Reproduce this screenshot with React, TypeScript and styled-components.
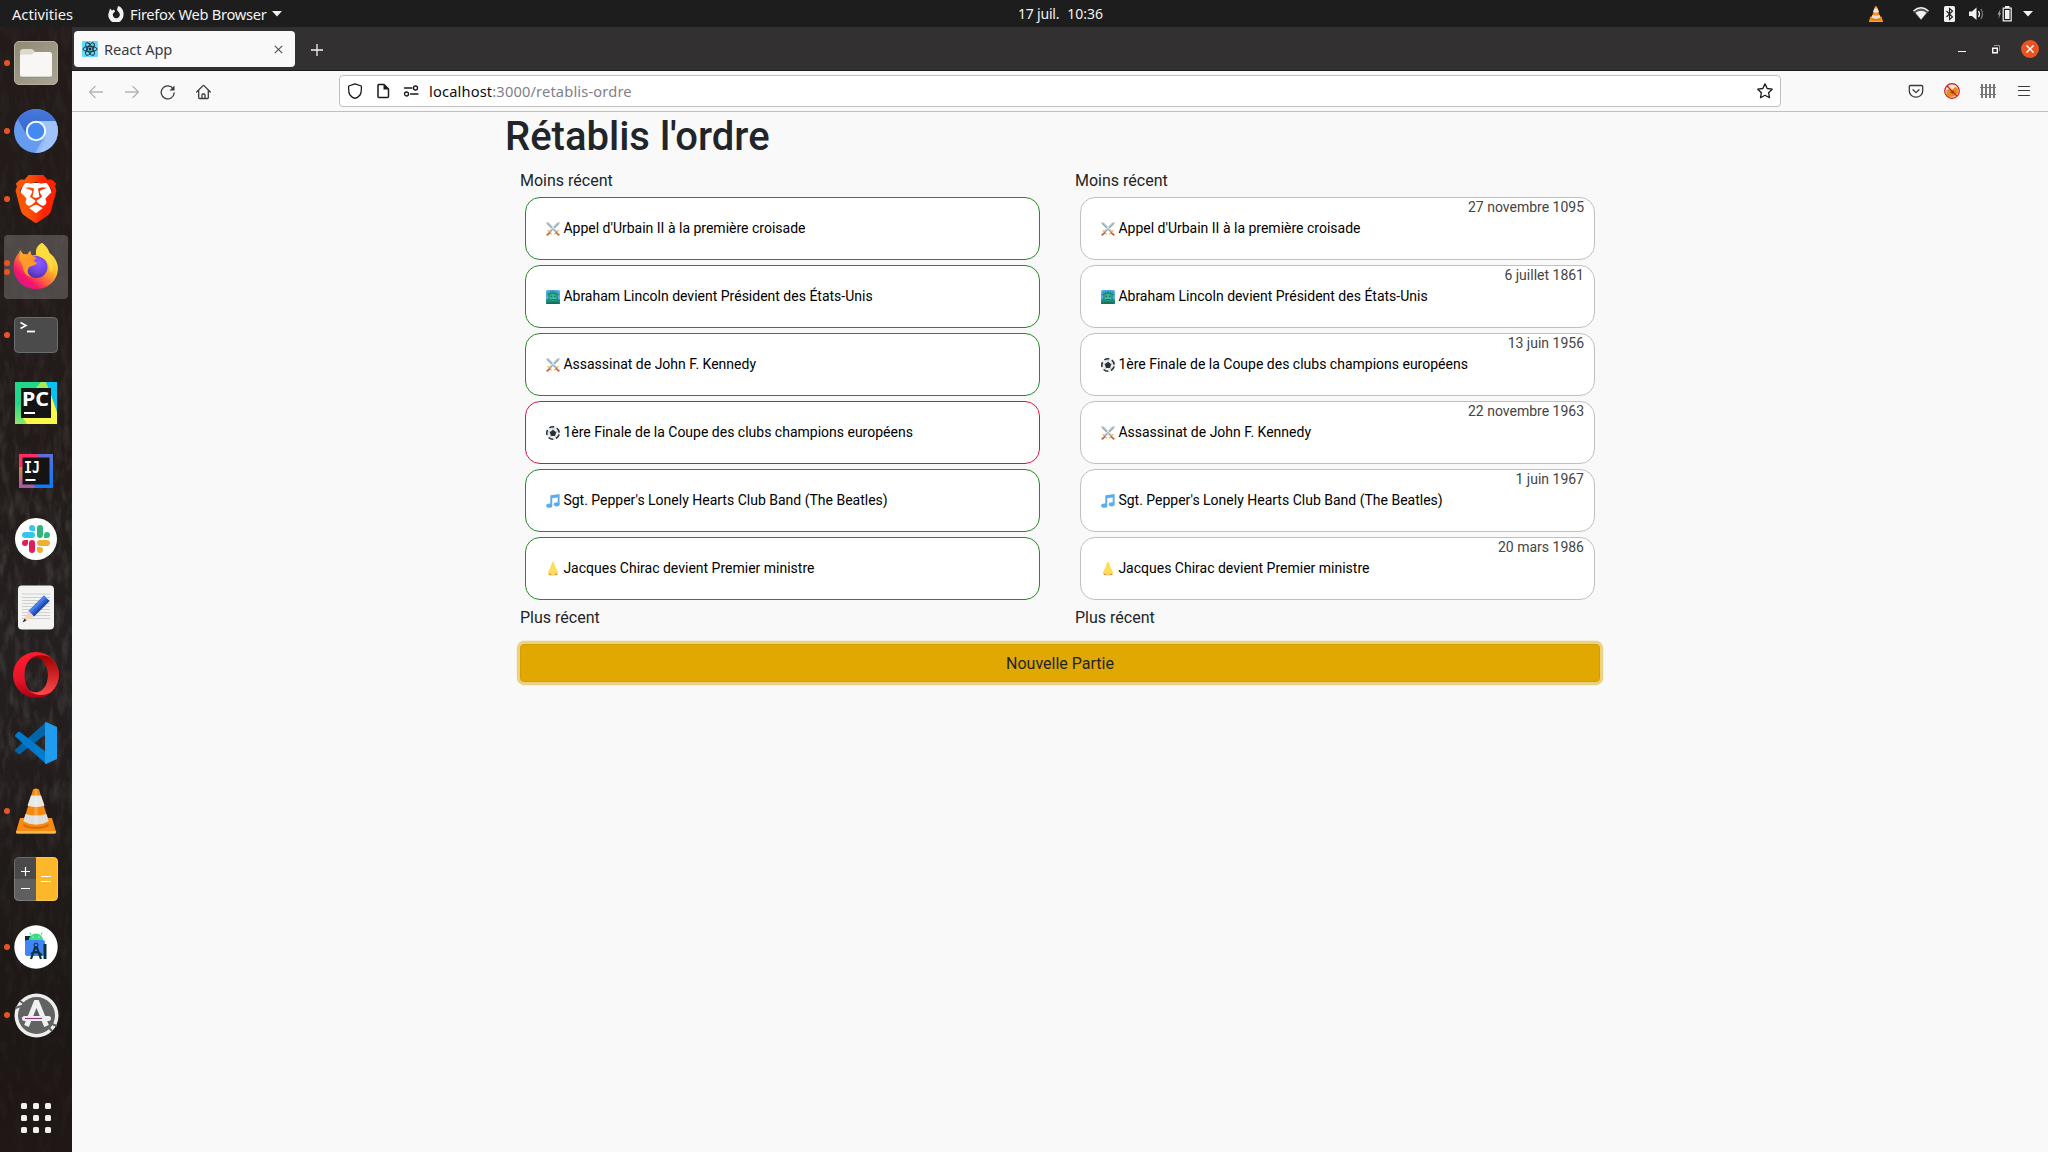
import React from "react";
import styled, { createGlobalStyle } from "styled-components";
import { SiBrave } from "react-icons/si";

const GlobalStyle = createGlobalStyle`
  * { box-sizing: border-box; }
  html, body { margin: 0; padding: 0; overflow: hidden; }
  svg { display: block; flex: none; }
`;

const Desktop = styled.div`
  display: flex;
  flex-direction: column;
  width: 2048px;
  height: 1152px;
  background: #1d1d1d;
  font-family: "Noto Sans", "Open Sans", sans-serif;
`;

/* ---------- top panel ---------- */

const Panel = styled.header`
  display: grid;
  grid-template-columns: 1018px 1fr auto;
  align-items: center;
  height: 27px;
  flex: none;
  background: #1d1d1d;
  color: #f2f2f2;
`;

const PanelLeft = styled.div`
  display: flex;
  align-items: center;
  padding-left: 12px;
`;

const PanelText = styled.span<{ $size?: number; $spacing?: number }>`
  font-size: ${(p) => p.$size ?? 14}px;
  line-height: 26px;
  letter-spacing: ${(p) => p.$spacing ?? 0}px;
  white-space: pre;
`;

const AppMenu = styled.div`
  display: flex;
  align-items: center;
  gap: 6px;
  padding-left: 35px;
`;

const Clock = styled.div`
  display: flex;
  gap: 8px;
`;

const Tray = styled.div`
  display: flex;
  align-items: center;
  height: 27px;
  padding-right: 15px;
`;

const TrayItem = styled.div<{ $after: number }>`
  margin-right: ${(p) => p.$after}px;
`;

/* ---------- dock ---------- */

const Workspace = styled.div`
  display: flex;
  flex: 1;
  min-height: 0;
`;

const Dock = styled.nav`
  position: relative;
  display: flex;
  flex-direction: column;
  gap: 4px;
  width: 72px;
  flex: none;
  padding: 4px;
  background: linear-gradient(180deg, #231b1a 0%, #221b1a 40%, #252020 55%, #201a19 75%, #1d1716 88%, #201716 100%);
`;

const Grain = styled.svg`
  position: absolute;
  inset: 0;
  width: 72px;
  height: 1125px;
`;

const DockItem = styled.div<{ $active?: boolean }>`
  position: relative;
  display: flex;
  align-items: center;
  justify-content: center;
  width: 64px;
  height: 64px;
  border-radius: 4px;
  background: ${(p) => (p.$active ? "rgba(255,255,255,0.2)" : "transparent")};
`;

const Dots = styled.div`
  position: absolute;
  left: 0;
  top: 0;
  height: 64px;
  display: flex;
  flex-direction: column;
  justify-content: center;
  gap: 3px;
`;

const Dot = styled.i`
  width: 6px;
  height: 6px;
  border-radius: 50%;
  background: #e95420;
`;

const AppsButton = styled.div`
  position: relative;
  display: grid;
  grid-template-columns: repeat(3, 6px);
  gap: 6px;
  justify-content: center;
  margin: auto 0 15px;
`;

const AppsDot = styled.i`
  width: 6px;
  height: 6px;
  border-radius: 1.5px;
  background: #f2f0ee;
`;

/* ---------- browser chrome ---------- */

const Browser = styled.main`
  display: flex;
  flex-direction: column;
  flex: 1;
  background: #f9f9fa;
`;

const TabStrip = styled.div`
  display: flex;
  align-items: center;
  height: 44px;
  padding: 0 9px 0 2px;
  background: #323031;
  border-bottom: 1px solid #1c1a1b;
`;

const Tab = styled.div`
  display: flex;
  align-items: center;
  width: 221px;
  height: 36px;
  margin-top: 1px;
  padding: 0 12px 0 8px;
  border-radius: 4px;
  background: #f9f9fa;
  color: #3b3b40;
`;

const TabTitle = styled.span`
  flex: 1;
  padding: 1px 0 0 6px;
  font-size: 14.67px;
  line-height: 35px;
  letter-spacing: -0.1px;
`;

const NewTab = styled.div`
  flex: 1;
  padding: 2px 0 0 16px;
`;

const WindowControls = styled.div`
  display: flex;
  align-items: center;
  padding-top: 1px;
`;

const CloseButton = styled.div`
  display: flex;
  align-items: center;
  justify-content: center;
  width: 18px;
  height: 18px;
  margin-left: 21px;
  border-radius: 50%;
  background: #e95420;
`;

const Toolbar = styled.div`
  display: flex;
  align-items: center;
  height: 41px;
  padding: 0 16px;
  background: #f9f9fa;
  border-bottom: 1px solid #bfbfc0;
`;

const NavButtons = styled.div`
  display: flex;
  gap: 20px;
  width: 251px;
  padding-top: 1px;
`;

const UrlBar = styled.div`
  display: flex;
  align-items: center;
  gap: 12px;
  width: 1442px;
  height: 32px;
  padding: 0 7px;
  border: 1px solid #bfbfc0;
  border-radius: 4px;
  background: #fff;
`;

const Url = styled.div`
  flex: 1;
  margin-left: -2px;
  font-size: 14.67px;
  line-height: 30px;
  letter-spacing: 0.15px;
  color: #80808a;
`;

const Host = styled.span`
  color: #0c0c0d;
`;

const Extensions = styled.div`
  display: flex;
  gap: 20px;
  margin-left: auto;
`;

/* ---------- page ---------- */

const Page = styled.section`
  flex: 1;
  background: #f9f9f9;
  color: #212529;
  font-family: Roboto, sans-serif;
  font-size: 16px;
  line-height: 1.5;
`;

const Container = styled.div`
  width: 1140px;
  margin: 0 auto;
  padding: 1px 15px 0;
`;

const Title = styled.h1`
  margin: 0 0 8px;
  font-size: 40px;
  font-weight: 500;
  line-height: 1.2;
`;

const Columns = styled.div`
  display: grid;
  grid-template-columns: 1fr 1fr;
`;

const Column = styled.div`
  padding: 0 15px;
`;

const List = styled.ul`
  display: flex;
  flex-direction: column;
  gap: 5px;
  margin: 0;
  padding: 4px 5px 6px;
  list-style: none;
`;

const Card = styled.li<{ $border: string }>`
  position: relative;
  display: flex;
  align-items: center;
  gap: 3.4px;
  height: 63px;
  padding: 0 20px;
  border: 1px solid ${(p) => p.$border};
  border-radius: 15px;
  background: #fff;
  color: #000;
  font-size: 14px;
`;

const CardDate = styled.span`
  position: absolute;
  top: -1px;
  right: 10px;
  line-height: 21px;
  color: #444;
`;

const NewGame = styled.button`
  display: block;
  width: 1080px;
  height: 38px;
  margin: 14px 15px 0;
  padding: 7px 12px 5px;
  border: 1px solid #d39e00;
  border-radius: 4px;
  background: #e0a800;
  box-shadow: 0 0 0 3.2px rgba(222, 170, 12, 0.5);
  color: #212529;
  font: 400 16px/24px Roboto, sans-serif;
`;

/* ---------- dock icons ---------- */

const FilesIcon = () => (
  <svg width="44" height="44" viewBox="0 0 44 44">
    <defs><linearGradient id="fi" x1="0" y1="0" x2="1" y2="1"><stop offset="0" stopColor="#8f8a74" /><stop offset="1" stopColor="#aaa592" /></linearGradient></defs>
    <rect x=".5" y=".5" width="43" height="43" rx="4.5" fill="url(#fi)" stroke="#b5b09e" />
    <path d="M6 11q0-3 3-3h8q2 0 3 1.600l1.500 2.400h12v6H6z" fill="#dcd9cd" />
    <path d="M6 16q0-2.500 2.500-2.500h9.500l3-2.500h14.500q2.500 0 2.500 2.500v20q0 2.500-2.500 2.500h-27Q6 36 6 33.500z" fill="#f8f7f6" />
    <path d="M7 36h30" stroke="#7f7b69" opacity=".5" />
  </svg>
);

const ChromiumIcon = () => (
  <svg width="44" height="44" viewBox="0 0 44 44">
    <defs>
      <clipPath id="cc"><circle cx="22" cy="22" r="22" /></clipPath>
      <linearGradient id="cr" x1="0" y1="0" x2="0" y2="1"><stop offset="0" stopColor="#4a7be0" /><stop offset="1" stopColor="#3463c6" /></linearGradient>
    </defs>
    <g clipPath="url(#cc)">
      <rect width="44" height="44" fill="#659bf0" />
      <path d="M22 12h24v34H20L31 27z" fill="#9fc3fa" />
      <path d="M-2-2h48v14H22a10 10 0 0 0-8.800 14.500L3 9z" fill="url(#cr)" />
      <path d="M31 27 21 44h4l6.500-14z" fill="#86aef0" opacity=".5" />
    </g>
    <circle cx="22" cy="22" r="10.200" fill="#f3f7fd" />
    <circle cx="22" cy="22" r="8.200" fill="#4289f4" />
  </svg>
);

const BraveWrap = styled.div`
  display: grid;
  place-items: center;
  > * { grid-area: 1 / 1; }
`;

const BraveLion = styled(SiBrave)`
  fill: url(#br);
`;

const BraveIcon = () => (
  <BraveWrap>
    <svg width="48" height="48" viewBox="0 0 24 24">
      <defs><linearGradient id="br" x1="0" x2="1"><stop offset=".3" stopColor="#fb5607" /><stop offset=".7" stopColor="#fc2303" /></linearGradient></defs>
      <path d="M6 4 18 4 20 9 17 17 12 21 7 17 4 9z" fill="#fff" />
    </svg>
    <BraveLion size={48} />
  </BraveWrap>
);

const FirefoxIcon = () => (
  <svg width="46" height="50" viewBox="0 0 46 50">
    <defs>
      <linearGradient id="fx" x1=".85" y1=".1" x2=".2" y2=".9"><stop offset="0" stopColor="#fff44f" /><stop offset=".35" stopColor="#ffbd2e" /><stop offset=".6" stopColor="#ff7139" /><stop offset=".85" stopColor="#f5156c" /><stop offset="1" stopColor="#e31587" /></linearGradient>
      <radialGradient id="fp" cx=".6" cy=".3" r=".8"><stop offset="0" stopColor="#9059ff" /><stop offset=".6" stopColor="#6b42d8" /><stop offset="1" stopColor="#45278d" /></radialGradient>
      <linearGradient id="fh" x1="0" y1="0" x2="1" y2="1"><stop offset="0" stopColor="#ffb52b" /><stop offset="1" stopColor="#ff7a20" /></linearGradient>
    </defs>
    <path d="M29 1c3 2 6.500 6 7.500 10 4 3 7 7 8.200 12.500C46.500 37 36 47 23 47S0.500 37 0.500 24.500C.500 19 3 14 6 11c.200-1 .5-2 1.500-3 .5 1.500 1 2.500 2 4C11 12 13 12 14.500 12.500 15 11 16 9.500 17.500 9c0 2 .5 3.500 1.500 4.500L23 13C22.500 8 25 3 29 1z" fill="url(#fx)" />
    <circle cx="23.500" cy="25" r="11" fill="url(#fp)" />
    <path d="M29 1c3 3 5.500 6 7 10.500 4.500 6 5.500 13 1.500 19 0-8-3-12-8-14.500-4-2-6.500-3-6.500-6 0-4 2.500-7.500 6-9z" fill="#ffdc3e" />
    <path d="M8 9.500 11 13h4l2-3.500c.500 3 2.500 5 6.500 6-1 2.500-3 4-6 5-1 2-2 3.500-2.500 6C11 23 8 20 6 18z" fill="url(#fh)" />
    <path d="M7 18c5-2 11-1 17 3-2 3-6 2.500-8 4.500-2.500 3-1 8 3 9.500-5-.5-9-4.500-9-10z" fill="#ff9a2b" />
  </svg>
);

const TerminalIcon = () => (
  <svg width="44" height="36" viewBox="0 0 44 36">
    <rect x=".5" y=".5" width="43" height="35" rx="4" fill="#4b4b4b" stroke="#6a6e70" />
    <path d="M6.500 5.500 12 8.500 6.500 11.500" fill="none" stroke="#fff" strokeWidth="1.600" />
    <path d="M13 14.500h8" stroke="#fff" strokeWidth="1.800" />
  </svg>
);

const IconText = styled.text`
  font-family: "Noto Sans", sans-serif;
  font-weight: 700;
  fill: #fff;
`;
const IconMono = styled(IconText)`
  font-family: "DejaVu Sans Mono", monospace;
`;

const PyCharmIcon = () => (
  <svg width="42" height="42" viewBox="0 0 42 42">
    <defs><linearGradient id="pc" x1="0" y1="1" x2="0" y2="0"><stop offset="0" stopColor="#8fe66a" /><stop offset=".5" stopColor="#21d789" /></linearGradient></defs>
    <rect width="42" height="42" fill="url(#pc)" />
    <path d="M26 0h5l5 6v8H20V7z" fill="#a8ea55" />
    <path d="M31 0h11v30L35 10z" fill="#07c3f2" />
    <path d="M35 10 42 30v12H12L8 36h27z" fill="#fcf84a" />
    <rect x="6" y="6" width="30" height="30" fill="#141414" />
    <IconText x="7" y="23.500" fontSize="19" textLength="27" lengthAdjust="spacingAndGlyphs">PC</IconText>
    <rect x="9" y="30" width="11" height="2" fill="#fff" />
  </svg>
);

const IntelliJIcon = () => (
  <svg width="34" height="34" viewBox="0 0 34 34">
    <defs>
      <linearGradient id="ij" x1="0" y1="0" x2="0" y2="1"><stop offset="0" stopColor="#5f6fd6" /><stop offset="1" stopColor="#087cfa" /></linearGradient>
      <linearGradient id="ik" x1="0" y1="0" x2="0" y2="1"><stop offset="0" stopColor="#d68a3d" /><stop offset="1" stopColor="#a259ac" /></linearGradient>
    </defs>
    <rect width="34" height="34" fill="url(#ij)" />
    <path d="M0 12h8v12l9 10H0z" fill="url(#ik)" />
    <path d="M0 0h17l6 5v8H0z" fill="#fe2d63" />
    <rect x="3.500" y="3.500" width="27" height="27" fill="#141414" />
    <IconMono x="5" y="19" fontSize="15" textLength="16" lengthAdjust="spacingAndGlyphs">IJ</IconMono>
    <rect x="6.500" y="25" width="10" height="2" fill="#fff" />
  </svg>
);

const SlackIcon = () => (
  <svg width="42" height="42" viewBox="0 0 42 42">
    <circle cx="21" cy="21" r="21" fill="#fff" />
    <g fill="#36c5f0"><rect x="7" y="14" width="13" height="6" rx="3" /><path d="M20 7v6h-3a3 3 0 1 1 3-3z" /></g>
    <g fill="#2eb67d"><rect x="22" y="7" width="6" height="13" rx="3" /><path d="M29 20v-3a3 3 0 1 1 3 3z" /></g>
    <g fill="#ecb22e"><rect x="22" y="22" width="13" height="6" rx="3" /><path d="M22 29h3a3 3 0 1 1-3 3z" /></g>
    <g fill="#e01e5a"><rect x="14" y="22" width="6" height="13" rx="3" /><path d="M13 22v3a3 3 0 1 1-3-3z" /></g>
  </svg>
);

const EditorIcon = () => (
  <svg width="36" height="45" viewBox="0 0 36 45">
    <rect x="0" y=".5" width="36" height="44" rx="4" fill="#f3f3f2" />
    <path d="M4 9h28M4 12.500h28M4 15.500h28M4 18.500h28M4 21.500h28M4 24.500h28M4 27.500h28M4 30.500h28M4 33.500h28" stroke="#cfcfcf" />
    <path d="M26 10.500 31.500 16 16 31.500 10.500 26z" fill="#3064d4" />
    <path d="M26 10.500 28 12.500 12.500 28 10.500 26z" fill="#4a82ea" />
    <path d="M29.800 14.300 31.500 16 16 31.500 14.300 29.800z" fill="#2049a8" />
    <path d="M10.500 26 16 31.500 5 37z" fill="#f6d5b5" />
    <path d="M6.500 33.500 8.500 35.500 4.500 37.500z" fill="#333" />
  </svg>
);

const OperaIcon = () => (
  <svg width="46" height="46" viewBox="0 0 46 46">
    <defs>
      <linearGradient id="o1" x1="0" y1="0" x2="0" y2="1"><stop offset="0" stopColor="#ff1b2d" /><stop offset=".6" stopColor="#e8142a" /><stop offset="1" stopColor="#a70014" /></linearGradient>
      <linearGradient id="o2" x1="0" y1="0" x2="0" y2="1"><stop offset="0" stopColor="#9c0000" /><stop offset="1" stopColor="#ff4b4b" /></linearGradient>
    </defs>
    <path fillRule="evenodd" d="M23 0a23 23 0 1 0 0 46 23 23 0 0 0 0-46zM23 5c7 0 12 8 12 18s-5 18-12 18-11.500-8-11.500-18S16 5 23 5z" fill="url(#o1)" />
    <path d="M16 8c5-6 15-6 22.300-2A23 23 0 0 1 38.300 40C31 44.500 21 44 16 38c8 6 19 0 19-15S24 2 16 8z" fill="url(#o2)" />
  </svg>
);

const CodeIcon = () => (
  <svg width="42" height="42" viewBox="0 0 42 42">
    <path d="M31 0v12L5 32Q3.500 32.500 2.500 31.500L.500 29.500Q-.5 28 .8 27z" fill="#0065a9" />
    <path d="M31 42V30L5 10Q3.500 9.500 2.500 10.500L.500 12.500Q-.5 14 .8 15z" fill="#007acc" />
    <path d="M31 0 42 5v32l-11 5q-1 0-1-1.500v-39Q30 0 31 0z" fill="#1f9cf0" />
  </svg>
);

const ConeIcon = ({ size = 46 }: { size?: number }) => (
  <svg width={size * 0.87} height={size} viewBox="0 0 40 46">
    <path d="M4 30h32l4 14q0 1.500-1.500 1.500h-37Q0 45.500 0 44z" fill="#f98b12" />
    <path d="M0 43h40v1q0 1.500-1.500 1.500h-37Q0 45.500 0 44z" fill="#ffb84a" />
    <path d="M9 32h22l2 6q-5 3-13 3T7 38z" fill="#d96a00" />
    <path d="M17 1.500q3-2 6 0L33 35q-4 4-13 4T7 35z" fill="#f68a10" />
    <path d="M15 7.500h10l3.500 10q-8.500 3-17 0z" fill="#e8e8e6" />
    <path d="M9.500 26q10.500 3 21 0l2.200 7q-5 3.500-12.700 3.500T7.300 33z" fill="#dededc" />
    <path d="M19 1h2l1 36h-4z" fill="#fff" opacity=".22" />
  </svg>
);

const CalculatorIcon = () => (
  <svg width="44" height="44" viewBox="0 0 44 44">
    <rect width="44" height="44" rx="5" fill="#4a4a4a" />
    <path d="M0 22h22v22H5q-5 0-5-5z" fill="#5f5f5f" />
    <path d="M22 0h17q5 0 5 5v34q0 5-5 5H22z" fill="#fcb82a" />
    <rect x=".5" y=".5" width="43" height="43" rx="4.500" fill="none" stroke="#fff" opacity=".18" />
    <path d="M7 14.500h9M11.500 10v9M7 31.500h9M27 19.500h10M27 24.500h10" stroke="#fff" strokeWidth="1.200" />
  </svg>
);

const StudioIcon = () => (
  <svg width="44" height="44" viewBox="0 0 44 44">
    <circle cx="22" cy="22" r="21.700" fill="#fff" />
    <path d="M11 11h8v5h-8z" fill="#073042" />
    <rect x="11" y="15" width="20" height="16" rx="2" fill="#4285f4" />
    <path d="M15 15a7 6.500 0 0 1 14 0z" fill="#3ddc84" />
    <path d="M17 10l-1-2.500M27 10l1-2.500" stroke="#3ddc84" />
    <circle cx="19" cy="12" r=".6" fill="#fff" /><circle cx="25" cy="12" r=".6" fill="#fff" />
    <rect x="29.500" y="19" width="3" height="15" fill="#073042" />
    <path d="M22 20 17 34M22 20l5 14M17 29q5-4 11 1" fill="none" stroke="#073042" strokeWidth="2.200" />
    <circle cx="22" cy="20" r="2" fill="#4285f4" stroke="#073042" />
  </svg>
);

const UpdaterIcon = () => (
  <svg width="45" height="45" viewBox="0 0 45 45">
    <circle cx="22.500" cy="22.500" r="22" fill="#ededed" />
    <circle cx="22.500" cy="22.500" r="18.500" fill="#626262" />
    <path d="M1.500 15 7 13M6 8l4.500 3M38 38l-4-4M43 33l-5-2" stroke="#626262" strokeWidth="2" />
    <path d="M12.500 33 22 9.500h1L32.500 33" fill="none" stroke="#f0f0f0" strokeWidth="5" />
    <rect x="8" y="23" width="29" height="5" rx="2.500" fill="#efefef" />
    <path d="M11 25.500h17" stroke="#8a3c84" strokeWidth="1.200" />
  </svg>
);

const dockApps: { Icon: React.FC; dots: number; active?: boolean }[] = [
  { Icon: FilesIcon, dots: 1 },
  { Icon: ChromiumIcon, dots: 1 },
  { Icon: BraveIcon, dots: 1 },
  { Icon: FirefoxIcon, dots: 2, active: true },
  { Icon: TerminalIcon, dots: 1 },
  { Icon: PyCharmIcon, dots: 0 },
  { Icon: IntelliJIcon, dots: 0 },
  { Icon: SlackIcon, dots: 0 },
  { Icon: EditorIcon, dots: 0 },
  { Icon: OperaIcon, dots: 0 },
  { Icon: CodeIcon, dots: 0 },
  { Icon: ConeIcon, dots: 1 },
  { Icon: CalculatorIcon, dots: 0 },
  { Icon: StudioIcon, dots: 1 },
  { Icon: UpdaterIcon, dots: 1 },
];

/* ---------- toolbar icons ---------- */

const Line = styled.svg<{ $color?: string }>`
  fill: none;
  stroke: ${(p) => p.$color ?? "#3a3a3f"};
  stroke-width: 1.3;
  stroke-linecap: round;
  stroke-linejoin: round;
`;

const Back = () => <Line $color="#b4b4b7" width="16" height="16"><path d="M14.500 8H1.500M7 2.500 1.500 8 7 13.500" /></Line>;
const Forward = () => <Line $color="#b4b4b7" width="16" height="16"><path d="M1.500 8h13M9 2.500l5.500 5.500L9 13.500" /></Line>;
const Reload = () => (
  <Line width="16" height="16">
    <path d="M13.300 5A6.500 6.500 0 1 0 14.200 9" />
    <path d="M14.500 1.500v5H9.500z" fill="#3a3a3f" stroke="none" />
  </Line>
);
const Home = () => <Line width="16" height="16"><path d="M.7 8 7 1.600q.5-.5 1 0L14.300 8M2.700 6.500v7.200q0 .8.800.8h8q.8 0 .8-.8V6.500M6 14.500v-3.500q0-1 1-1h1q1 0 1 1v3.500" /></Line>;
const Shield = () => <Line $color="#1a1a1c" width="16" height="16"><path d="M8 .8 14.300 3q.5 6.500-1.300 9-1.800 2.400-5 3.400-3.200-1-5-3.400Q1.200 9.500 1.700 3z" /></Line>;
const Doc = () => (
  <Line $color="#1a1a1c" width="16" height="16">
    <path d="M3.500 1.500H9L13.500 6v7.500q0 1-1 1h-8.500q-1 0-1-1v-11q0-1 1-1z" strokeWidth="1.500" />
    <path d="M8.500 1 14 6.500H8.500z" fill="#1a1a1c" stroke="none" />
  </Line>
);
const Permissions = () => (
  <Line $color="#1a1a1c" width="16" height="16">
    <circle cx="3.500" cy="11" r="2" /><path d="M7.500 11H15" /><circle cx="12.500" cy="5" r="2" /><path d="M1.500 5H9" />
  </Line>
);
const Star = () => <Line $color="#1a1a1c" width="16" height="16"><path d="M8 .9l2.200 4.600 5 .7-3.600 3.500.9 5L8 12.300 3.500 14.700l.9-5L.8 6.200l5-.7z" /></Line>;
const Pocket = () => <Line width="16" height="16"><path d="M2.300 2.500h11.400q1 0 1 1V8a6.700 6.200 0 0 1-13.400 0V3.500q0-1 1-1zM5 6.700l3 2.900 3-2.900" /></Line>;
const BlockedFox = () => (
  <svg width="16" height="16">
    <circle cx="8" cy="8" r="7.200" fill="#f5e3d8" />
    <path d="M2.500 7 6 6l1.500 1.500L11 4l2.500 1 .5 5-4 3.500-5 .5-2.500-2z" fill="#e88a1a" />
    <path d="M6 9l4-1.500L9 11z" fill="#8a4a10" />
    <circle cx="8" cy="8" r="7.300" fill="none" stroke="#d01818" strokeWidth="1.200" />
    <path d="M3 3l10 10" stroke="#d01818" strokeWidth="1.200" />
  </svg>
);
const Fence = () => (
  <svg width="16" height="16" stroke="#77777a">
    <path d="M2 1v14M6 1v14M10 1v14M14 1v14" strokeWidth="2" />
    <path d="M0 4.500h16M0 11.500h16" strokeWidth="1" />
  </svg>
);
const Menu = () => <Line width="16" height="16"><path d="M2.500 3.500h11M2.500 7.500h11M2.500 12.500h11" strokeWidth="1.200" /></Line>;

const ReactLogo = () => (
  <svg width="16" height="16" viewBox="0 0 16 16">
    <rect width="16" height="16" rx="1" fill="#61dafb" />
    <g fill="none" stroke="#20232a" strokeWidth=".9">
      <ellipse cx="8" cy="8" rx="7" ry="2.700" />
      <ellipse cx="8" cy="8" rx="7" ry="2.700" transform="rotate(60 8 8)" />
      <ellipse cx="8" cy="8" rx="7" ry="2.700" transform="rotate(120 8 8)" />
    </g>
    <circle cx="8" cy="8" r="1.400" fill="#20232a" />
  </svg>
);

const Caret = () => <svg width="10" height="6"><path d="M0 0h10L5 5.500z" fill="#f2f2f2" /></svg>;

/* ---------- event pictograms ---------- */

const Swords = () => (
  <svg width="14" height="14" viewBox="0 0 36 36">
    <path d="M1 1h6l22 23-4 4L3 7zM35 1h-6L7 24l4 4L33 7z" fill="#b4c2cc" />
    <path d="M1 1l26 26M35 1 9 27" stroke="#8899a6" strokeWidth="1.500" />
    <path d="M5 20l11 11-2 2L3 22zM31 20 20 31l2 2 11-11z" fill="#ffac33" />
    <path d="M9 25l3 3-8 8-4-3zM27 25l-3 3 8 8 4-3z" fill="#c1694f" />
  </svg>
);
const Liberty = () => (
  <svg width="14" height="14" viewBox="0 0 36 36">
    <rect width="36" height="36" rx="4" fill="#55acee" />
    <path d="M0 36V26l6-4V15L0 11l7-1-4-6 7 4 2-8 3 7 3-7 3 7 3-7 1 8 8-4-4 6 7 1-6 4v7l6 4v10z" fill="#1f8a75" />
    <path d="M9 13q9-5 18 0v9q-9 12-18 0z" fill="#3db9a0" />
    <path d="M11 16h5M20 16h5M13 25h10" stroke="#0e5f50" strokeWidth="2.500" />
    <path d="M2 33q16-6 32 0v3H2z" fill="#11705e" />
  </svg>
);
const Football = () => (
  <svg width="14" height="14" viewBox="0 0 36 36">
    <circle cx="18" cy="18" r="18" fill="#e9eef1" />
    <path d="M18 9.500 26.500 16l-3.300 10H12.800L9.500 16z" fill="#292f33" />
    <circle cx="18" cy="18" r="16" fill="none" stroke="#292f33" strokeWidth="4" strokeDasharray="13 7.100" strokeDashoffset="-3.500" />
    <path d="M18 10V5M25 16l5-2M22.500 25l3 4M13.500 25l-3 4M10.500 16l-5-2" stroke="#8f9aa2" strokeWidth="1.500" />
  </svg>
);
const Music = () => (
  <svg width="14" height="14" viewBox="0 0 36 36" fill="#5dadec">
    <path d="M12 3 35 0v26h-5V9l-14 2v17h-5V5q0-2 1-2z" />
    <ellipse cx="8.500" cy="30" rx="8" ry="5.500" /><ellipse cx="27.500" cy="26.500" rx="7.500" ry="5.500" />
  </svg>
);
const Nose = () => (
  <svg width="14" height="14" viewBox="0 0 36 36">
    <path d="M18 0c3 0 4 5 6 12 2 6 7 11 7 17 0 5-4 6-7 5-2 2-10 2-12 0-3 1-7 0-7-5 0-6 5-11 7-17 2-7 3-12 6-12z" fill="#ffdc5d" />
    <path d="M8 32q3-3 5 1M28 32q-3-3-5 1" stroke="#c1694f" strokeWidth="2.500" fill="none" />
  </svg>
);

const events = {
  crusade: { Icon: Swords, label: "Appel d'Urbain II à la première croisade", date: "27 novembre 1095" },
  lincoln: { Icon: Liberty, label: "Abraham Lincoln devient Président des États-Unis", date: "6 juillet 1861" },
  cup: { Icon: Football, label: "1ère Finale de la Coupe des clubs champions européens", date: "13 juin 1956" },
  kennedy: { Icon: Swords, label: "Assassinat de John F. Kennedy", date: "22 novembre 1963" },
  beatles: { Icon: Music, label: "Sgt. Pepper's Lonely Hearts Club Band (The Beatles)", date: "1 juin 1967" },
  chirac: { Icon: Nose, label: "Jacques Chirac devient Premier ministre", date: "20 mars 1986" },
};
type EventKey = keyof typeof events;

const answer: EventKey[] = ["crusade", "lincoln", "kennedy", "cup", "beatles", "chirac"];
const solution: EventKey[] = ["crusade", "lincoln", "cup", "kennedy", "beatles", "chirac"];

const Timeline = ({ items, border, dated }: { items: EventKey[]; border: (k: EventKey) => string; dated?: boolean }) => (
  <Column>
    <div>Moins récent</div>
    <List>
      {items.map((key) => {
        const { Icon, label, date } = events[key];
        return (
          <Card key={key} $border={border(key)}>
            <Icon />
            <span>{label}</span>
            {dated && <CardDate>{date}</CardDate>}
          </Card>
        );
      })}
    </List>
    <div>Plus récent</div>
  </Column>
);

export default function App() {
  return (
    <Desktop>
      <GlobalStyle />
      <Panel>
        <PanelLeft>
          <PanelText $size={14.67}>Activities</PanelText>
          <AppMenu>
            <svg width="16" height="16" viewBox="0 0 16 16">
              <path d="M2 2.500 4 4.500 6 3.500 7 5.500 5 7.500a3.500 3.500 0 1 0 6-1L9 4l1-4c4 1 6 5 5.500 9A7.600 7.600 0 1 1 1 6z" fill="#f2f2f2" />
            </svg>
            <PanelText $size={14.67} $spacing={-0.28}>Firefox Web Browser</PanelText>
            <Caret />
          </AppMenu>
        </PanelLeft>
        <Clock>
          <PanelText $spacing={-0.2}>17 juil.</PanelText>
          <PanelText>10:36</PanelText>
        </Clock>
        <Tray>
          <TrayItem $after={30}><ConeIcon size={16} /></TrayItem>
          <TrayItem $after={15}>
            <svg width="16" height="13"><path d="M0 4Q8-3 16 4L8 13z" fill="#555" /><path d="M.5 4Q8-2.500 15.500 4" fill="none" stroke="#f2f2f2" strokeWidth="1.400" /><path d="M2.500 5.700Q8 2 13.500 5.700L8 12.500z" fill="#f2f2f2" /></svg>
          </TrayItem>
          <TrayItem $after={14}>
            <svg width="11" height="16"><rect width="11" height="16" rx="1.500" fill="#f2f2f2" /><path d="M2.500 5 8.500 11 5.500 13.500v-11L8.500 5l-6 6" fill="none" stroke="#1d1d1d" strokeWidth="1.100" /></svg>
          </TrayItem>
          <TrayItem $after={13}>
            <svg width="15" height="14"><path d="M0 4.500h3l4.500-4v12.500l-4.500-4H0z" fill="#f2f2f2" /><path d="M9.500 4q2 3 0 6" fill="none" stroke="#f2f2f2" strokeWidth="1.300" /><path d="M11.800 2q3.500 5 0 10" fill="none" stroke="#777" strokeWidth="1.300" /></svg>
          </TrayItem>
          <TrayItem $after={11}>
            <svg width="15" height="16"><path d="M3.500 3 .5 8.500h1.500L1.500 13l2.500-6H3z" fill="#999" /><path d="M6.200 2.200h8v12.600h-8z" fill="none" stroke="#f2f2f2" strokeWidth="1.200" /><path d="M8 0h4.500v2H8zM8 4h4.500v9H8z" fill="#f2f2f2" /></svg>
          </TrayItem>
          <Caret />
        </Tray>
      </Panel>

      <Workspace>
        <Dock>
          <Grain>
            <defs>
              <filter id="grain" x="0" y="0" width="100%" height="100%">
                <feTurbulence type="fractalNoise" baseFrequency="0.13 0.045" numOctaves="4" seed="7" />
                <feColorMatrix values="0 0 0 0 .36  0 0 0 0 .36  0 0 0 0 .32  .9 .6 0 0 -.66" />
              </filter>
              <linearGradient id="fade" x1="0" y1="0" x2="0" y2="1">
                <stop offset="0" stopColor="#555" /><stop offset=".25" stopColor="#666" /><stop offset=".4" stopColor="#fff" />
                <stop offset=".65" stopColor="#fff" /><stop offset=".75" stopColor="#777" /><stop offset="1" stopColor="#333" />
              </linearGradient>
              <mask id="fademask"><rect width="72" height="1125" fill="url(#fade)" /></mask>
            </defs>
            <g mask="url(#fademask)">
              <rect width="72" height="1125" filter="url(#grain)" opacity=".4" />
            </g>
          </Grain>
          {dockApps.map(({ Icon, dots, active }, i) => (
            <DockItem key={i} $active={active}>
              <Dots>{Array.from({ length: dots }, (_, d) => <Dot key={d} />)}</Dots>
              <Icon />
            </DockItem>
          ))}
          <AppsButton>{Array.from({ length: 9 }, (_, i) => <AppsDot key={i} />)}</AppsButton>
        </Dock>

        <Browser>
          <TabStrip>
            <Tab>
              <ReactLogo />
              <TabTitle>React App</TabTitle>
              <svg width="9" height="9"><path d="M.8.800l7.400 7.400M8.200.800.800 8.200" stroke="#55555a" strokeWidth="1.200" /></svg>
            </Tab>
            <NewTab><svg width="12" height="12"><path d="M6 0v12M0 6h12" stroke="#f5f5f5" strokeWidth="1.300" /></svg></NewTab>
            <WindowControls>
              <svg width="8" height="8"><path d="M0 6.500h8" stroke="#fff" /></svg>
              <svg width="34" height="9"><path d="M26.700 3.200h4.600v4.600h-4.600z" fill="none" stroke="#fff" strokeWidth="1.400" /><path d="M28 .5h5.500V6" fill="none" stroke="#999" /></svg>
              <CloseButton><svg width="8" height="8"><path d="M.5.500l7 7M7.500.500l-7 7" stroke="#fff" strokeWidth="1.500" /></svg></CloseButton>
            </WindowControls>
          </TabStrip>
          <Toolbar>
            <NavButtons><Back /><Forward /><Reload /><Home /></NavButtons>
            <UrlBar>
              <Shield /><Doc /><Permissions />
              <Url><Host>localhost</Host>:3000/retablis-ordre</Url>
              <Star />
            </UrlBar>
            <Extensions><Pocket /><BlockedFox /><Fence /><Menu /></Extensions>
          </Toolbar>
          <Page>
            <Container>
              <Title>Rétablis l'ordre</Title>
              <Columns>
                <Timeline items={answer} border={(k) => (k === "cup" ? "#dc143c" : "#228b22")} />
                <Timeline items={solution} border={() => "#c0c0c0"} dated />
              </Columns>
              <NewGame>Nouvelle Partie</NewGame>
            </Container>
          </Page>
        </Browser>
      </Workspace>
    </Desktop>
  );
}
